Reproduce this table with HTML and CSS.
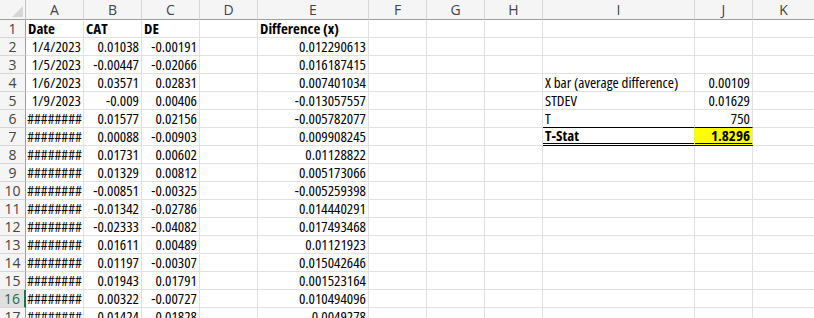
FILE: index.html
```html
<!DOCTYPE html>
<html>
<head>
<meta charset="utf-8">
<link rel="stylesheet" href="styles.css">
</head>
<body>
<div class="sheet">
  <div class="row hdr">
    <div class="corner"><svg class="tri" width="11" height="11" viewBox="0 0 11 11"><polygon points="0,11 11,0 11,11" fill="#d6d6d6"/></svg></div>
    <div class="ch">A</div><div class="ch">B</div><div class="ch">C</div><div class="ch">D</div><div class="ch">E</div><div class="ch">F</div><div class="ch">G</div><div class="ch">H</div><div class="ch">I</div><div class="ch">J</div><div class="ch">K</div>
  </div>
  <div class="row">
    <div class="rh">1</div><div class="c b">Date</div><div class="c b">CAT</div><div class="c b">DE</div><div class="c"></div><div class="c b">Difference (x)</div><div class="c"></div><div class="c"></div><div class="c"></div><div class="c"></div><div class="c"></div><div class="c"></div>
  </div>
  <div class="row">
    <div class="rh">2</div><div class="c n">1/4/2023</div><div class="c n">0.01038</div><div class="c n">-0.00191</div><div class="c"></div><div class="c n">0.012290613</div><div class="c"></div><div class="c"></div><div class="c"></div><div class="c"></div><div class="c"></div><div class="c"></div>
  </div>
  <div class="row">
    <div class="rh">3</div><div class="c n">1/5/2023</div><div class="c n">-0.00447</div><div class="c n">-0.02066</div><div class="c"></div><div class="c n">0.016187415</div><div class="c"></div><div class="c"></div><div class="c"></div><div class="c"></div><div class="c"></div><div class="c"></div>
  </div>
  <div class="row">
    <div class="rh">4</div><div class="c n">1/6/2023</div><div class="c n">0.03571</div><div class="c n">0.02831</div><div class="c"></div><div class="c n">0.007401034</div><div class="c"></div><div class="c"></div><div class="c"></div><div class="c">X bar (average difference)</div><div class="c n">0.00109</div><div class="c"></div>
  </div>
  <div class="row">
    <div class="rh">5</div><div class="c n">1/9/2023</div><div class="c n">-0.009</div><div class="c n">0.00406</div><div class="c"></div><div class="c n">-0.013057557</div><div class="c"></div><div class="c"></div><div class="c"></div><div class="c">STDEV</div><div class="c n">0.01629</div><div class="c"></div>
  </div>
  <div class="row">
    <div class="rh">6</div><div class="c h">########</div><div class="c n">0.01577</div><div class="c n">0.02156</div><div class="c"></div><div class="c n">-0.005782077</div><div class="c"></div><div class="c"></div><div class="c"></div><div class="c line">T</div><div class="c n line">750</div><div class="c"></div>
  </div>
  <div class="row">
    <div class="rh">7</div><div class="c h">########</div><div class="c n">0.00088</div><div class="c n">-0.00903</div><div class="c"></div><div class="c n">0.009908245</div><div class="c"></div><div class="c"></div><div class="c"></div><div class="c b dbl tlabel">T-Stat</div><div class="c n b dbl hl">1.8296</div><div class="c"></div>
  </div>
  <div class="row">
    <div class="rh">8</div><div class="c h">########</div><div class="c n">0.01731</div><div class="c n">0.00602</div><div class="c"></div><div class="c n">0.01128822</div><div class="c"></div><div class="c"></div><div class="c"></div><div class="c"></div><div class="c"></div><div class="c"></div>
  </div>
  <div class="row">
    <div class="rh">9</div><div class="c h">########</div><div class="c n">0.01329</div><div class="c n">0.00812</div><div class="c"></div><div class="c n">0.005173066</div><div class="c"></div><div class="c"></div><div class="c"></div><div class="c"></div><div class="c"></div><div class="c"></div>
  </div>
  <div class="row">
    <div class="rh">10</div><div class="c h">########</div><div class="c n">-0.00851</div><div class="c n">-0.00325</div><div class="c"></div><div class="c n">-0.005259398</div><div class="c"></div><div class="c"></div><div class="c"></div><div class="c"></div><div class="c"></div><div class="c"></div>
  </div>
  <div class="row">
    <div class="rh">11</div><div class="c h">########</div><div class="c n">-0.01342</div><div class="c n">-0.02786</div><div class="c"></div><div class="c n">0.014440291</div><div class="c"></div><div class="c"></div><div class="c"></div><div class="c"></div><div class="c"></div><div class="c"></div>
  </div>
  <div class="row">
    <div class="rh">12</div><div class="c h">########</div><div class="c n">-0.02333</div><div class="c n">-0.04082</div><div class="c"></div><div class="c n">0.017493468</div><div class="c"></div><div class="c"></div><div class="c"></div><div class="c"></div><div class="c"></div><div class="c"></div>
  </div>
  <div class="row">
    <div class="rh">13</div><div class="c h">########</div><div class="c n">0.01611</div><div class="c n">0.00489</div><div class="c"></div><div class="c n">0.01121923</div><div class="c"></div><div class="c"></div><div class="c"></div><div class="c"></div><div class="c"></div><div class="c"></div>
  </div>
  <div class="row">
    <div class="rh">14</div><div class="c h">########</div><div class="c n">0.01197</div><div class="c n">-0.00307</div><div class="c"></div><div class="c n">0.015042646</div><div class="c"></div><div class="c"></div><div class="c"></div><div class="c"></div><div class="c"></div><div class="c"></div>
  </div>
  <div class="row">
    <div class="rh">15</div><div class="c h">########</div><div class="c n">0.01943</div><div class="c n">0.01791</div><div class="c"></div><div class="c n">0.001523164</div><div class="c"></div><div class="c"></div><div class="c"></div><div class="c"></div><div class="c"></div><div class="c"></div>
  </div>
  <div class="row">
    <div class="rh sel">16</div><div class="c h">########</div><div class="c n">0.00322</div><div class="c n">-0.00727</div><div class="c"></div><div class="c n">0.010494096</div><div class="c"></div><div class="c"></div><div class="c"></div><div class="c"></div><div class="c"></div><div class="c"></div>
  </div>
  <div class="row">
    <div class="rh">17</div><div class="c h">########</div><div class="c n">0.01424</div><div class="c n">0.01828</div><div class="c"></div><div class="c n">0.0049278</div><div class="c"></div><div class="c"></div><div class="c"></div><div class="c"></div><div class="c"></div><div class="c"></div>
  </div>
</div>
</body>
</html>
```
FILE: styles.css
```css
html, body {
  margin: 0;
  padding: 0;
  background: #fff;
  overflow: hidden;
  height: 318px;
}

.sheet {
  width: 814px;
  font-family: "Open Sans", sans-serif;
  font-stretch: 75%;
  font-size: 15px;
  color: #000;
}

.row {
  display: grid;
  grid-template-columns: 26px 58px 58px 58px 58px 111px 58px 58px 58px 152px 58px 62px;
  height: 18px;
}

.row.hdr {
  height: 20px;
}

.row > div {
  box-sizing: border-box;
  border-right: 1px solid #e1e1e1;
  border-bottom: 1px solid #e1e1e1;
  white-space: nowrap;
  line-height: 17px;
  padding: 0 2px;
}

.corner {
  background: #f5f5f5;
  position: relative;
  border-bottom-color: #9e9e9e !important;
  border-right-color: #c8c8c8 !important;
}

.tri {
  position: absolute;
  right: 2px;
  bottom: 2px;
}

.ch {
  background: #f5f5f5;
  text-align: center;
  font-stretch: 100%;
  font-size: 14px;
  color: #444;
  line-height: 19px !important;
  border-right-color: #d6d6d6 !important;
  border-bottom-color: #9e9e9e !important;
}

.rh {
  background: #f5f5f5;
  text-align: center;
  font-stretch: 100%;
  font-size: 14px;
  color: #444;
  padding: 0 !important;
  border-right-color: #9e9e9e !important;
  border-bottom-color: #d6d6d6 !important;
}

.rh.sel {
  background: #e0e0e0;
  color: #1e6b41;
  border-right: 2px solid #217346 !important;
}

.b {
  font-weight: bold;
}

.n {
  text-align: right;
}

.h {
  text-align: center;
  padding: 0 !important;
}

.line {
  border-bottom-color: #000 !important;
}

.dbl {
  border-bottom: 3px double #000 !important;
  line-height: 15px !important;
}

.tlabel {
  border-right-color: #ffff00 !important;
}

.hl {
  background: #ffff00;
}
```
